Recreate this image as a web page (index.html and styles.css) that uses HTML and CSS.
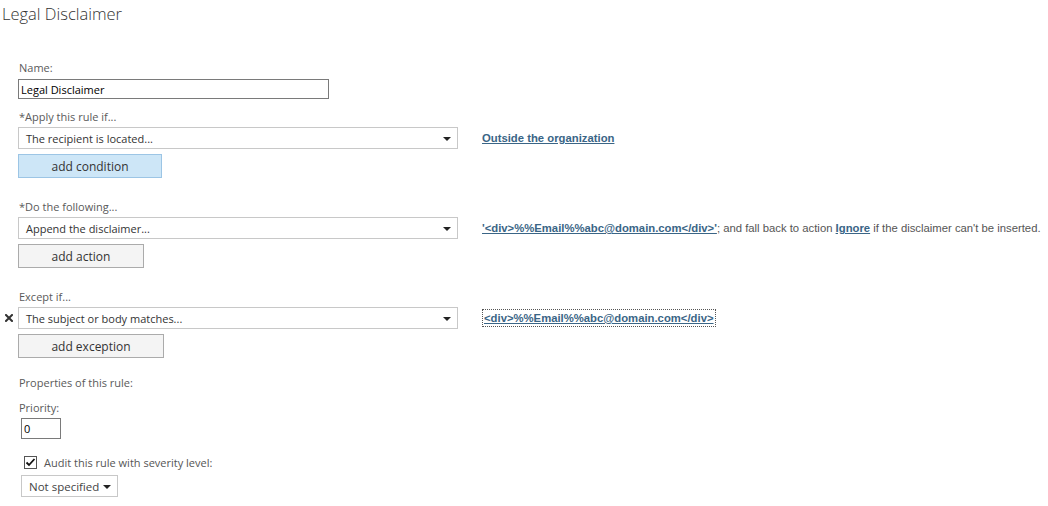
FILE: index.html
```html
<!DOCTYPE html>
<html>
<head>
<meta charset="utf-8">
<link rel="stylesheet" href="styles.css">
</head>
<body>
<div class="page">
  <h1 class="title">Legal Disclaimer</h1>
  <div class="form">
    <div class="label lbl-name">Name:</div>
    <input class="text-input name-input" type="text" value="Legal Disclaimer">

    <div class="label lbl-apply">*Apply this rule if...</div>
    <div class="rule-row">
      <div class="select wide"><span>The recipient is located...</span><i class="caret"></i></div>
      <div class="rule-desc"><a class="link">Outside the organization</a></div>
    </div>
    <button class="btn btn-primary btn-cond">add condition</button>

    <div class="label lbl-do">*Do the following...</div>
    <div class="rule-row">
      <div class="select wide"><span>Append the disclaimer...</span><i class="caret"></i></div>
      <div class="rule-desc"><a class="link">'&lt;div&gt;%%Email%%abc@domain.com&lt;/div&gt;'</a>; and fall back to action <a class="link">Ignore</a> if the disclaimer can't be inserted.</div>
    </div>
    <button class="btn btn-action">add action</button>

    <div class="label lbl-except">Except if...</div>
    <div class="rule-row">
      <span class="remove"><svg width="8" height="8" viewBox="0 0 8 8"><path d="M1 1L7 7M7 1L1 7" stroke="#333" stroke-width="2" stroke-linecap="square"/></svg></span>
      <div class="select wide"><span>The subject or body matches...</span><i class="caret"></i></div>
      <div class="rule-desc"><a class="link dotted">&lt;div&gt;%%Email%%abc@domain.com&lt;/div&gt;</a></div>
    </div>
    <button class="btn btn-except">add exception</button>

    <div class="label lbl-props">Properties of this rule:</div>
    <div class="label lbl-prio">Priority:</div>
    <input class="text-input prio-input" type="text" value="0">

    <div class="audit-row">
      <span class="checkbox"><svg width="13" height="13" viewBox="0 0 13 13"><rect x="0.5" y="0.5" width="12" height="12" fill="#fff" stroke="#555"/><path d="M2.5 6.5L5 9L10.5 3" fill="none" stroke="#111" stroke-width="1.8"/></svg></span>
      <span class="audit-text">Audit this rule with severity level:</span>
    </div>
    <div class="select small"><span>Not specified</span><i class="caret"></i></div>
  </div>
</div>
</body>
</html>
```

FILE: styles.css
```css
* { box-sizing: border-box; }
html, body { margin: 0; padding: 0; background: #fff; }
body { font-family: "Open Sans", "Noto Sans", sans-serif; color: #333; }
.page { width: 1048px; height: 506px; overflow: hidden; }
.title {
  margin: 0;
  padding: 2px 0 0 2px;
  height: 28px;
  font-size: 16.5px;
  line-height: 24px;
  font-weight: 300;
  color: #333;
}
.form { padding-left: 18px; display: flex; flex-direction: column; align-items: flex-start; }
.label { font-size: 11px; line-height: 16px; color: #5a5a5a; padding-left: 1px; }
.lbl-name { margin-top: 32px; }
.lbl-apply { margin-top: 10px; }
.lbl-do { margin-top: 21px; }
.lbl-except { margin-top: 21px; }
.lbl-props { margin-top: 17px; }
.lbl-prio { margin-top: 9px; }
.text-input {
  font-family: "Open Sans", "Noto Sans", sans-serif;
  font-size: 11px;
  color: #000;
  border: 1px solid #7a7a7a;
  background: #fff;
  padding: 0 0 0 2px;
  margin: 2px 0 0 0;
  outline: none;
}
.name-input { width: 311px; height: 20px; margin-top: 3px; }
.prio-input { width: 40px; height: 21px; margin-left: 3px; }
.rule-row { display: flex; align-items: center; margin-top: 2px; position: relative; }
.select {
  display: flex; align-items: center; justify-content: space-between;
  height: 22px;
  border: 1px solid #c8c8c8;
  background: #fff;
  font-size: 11px;
  color: #333;
  padding: 0 6px 0 7px;
}
.select.wide { width: 440px; }
.caret {
  width: 0; height: 0;
  border-left: 4px solid transparent;
  border-right: 4px solid transparent;
  border-top: 4px solid #222;
  margin-top: 2px;
}
.select.small { width: 97px; margin-left: 3px; margin-top: 6px; padding: 0 6px 0 7px; font-size: 11.5px; color: #444; }
.rule-desc { margin-left: 24px; font-family: "Liberation Sans", Arial, sans-serif; font-size: 11.3px; color: #555; white-space: nowrap; }
.link { color: #3a6586; font-weight: bold; text-decoration: underline; }
.link.dotted { border: 1px dotted #555; padding: 2px 1px; }
.remove { position: absolute; left: -13px; top: 7px; display: flex; }
.btn {
  font-family: "Open Sans", "Noto Sans", sans-serif;
  font-size: 12px;
  color: #333;
  height: 24px;
  margin-top: 5px;
  padding: 0;
  cursor: pointer;
}
.btn-primary { background: #cde6f7; border: 1px solid #9cc5e5; width: 144px; }
.btn-action { background: #f4f4f4; border: 1px solid #ababab; width: 126px; }
.btn-except { background: #f4f4f4; border: 1px solid #ababab; width: 146px; }
.audit-row { display: flex; align-items: center; margin-top: 16px; margin-left: 6px; height: 14px; }
.checkbox { display: flex; }
.audit-text { font-size: 11px; color: #555; margin-left: 7px; }
```
